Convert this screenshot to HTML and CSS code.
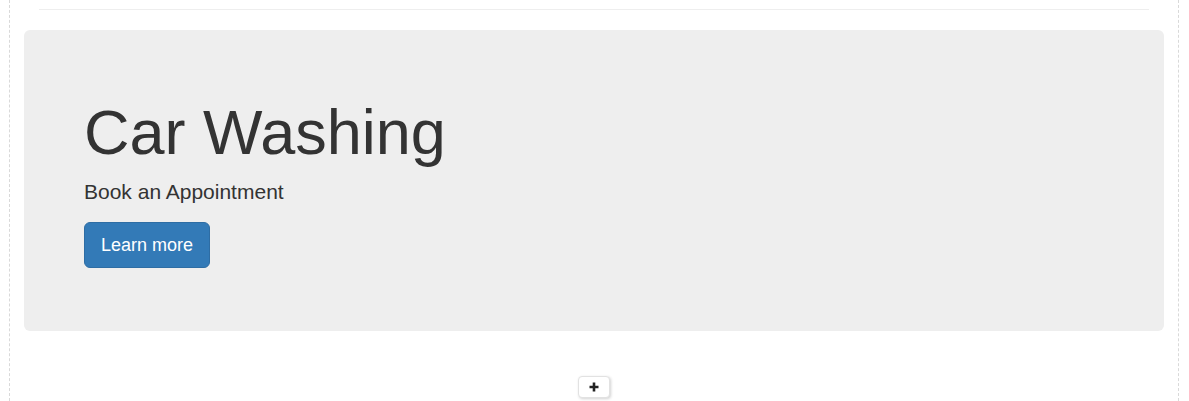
FILE: index.html
```html
<!DOCTYPE html>
<html>
<head>
<meta charset="utf-8">
<link rel="stylesheet" href="styles.css">
</head>
<body>
<div class="canvas">
  <div class="top-rule"></div>
  <div class="jumbotron">
    <h1 class="title">Car Washing</h1>
    <p class="lead">Book an Appointment</p>
    <p class="actions"><a class="btn-primary" href="#">Learn more</a></p>
  </div>
  <div class="add-row">
    <button class="add-btn" type="button" aria-label="Add"><svg class="plus" width="10" height="10" viewBox="0 0 10 10"><path d="M5 0.5V9.5M0.5 5H9.5" stroke="#222" stroke-width="2.6" fill="none"/></svg></button>
  </div>
</div>
</body>
</html>
```
FILE: styles.css
```css
html, body {
  margin: 0;
  padding: 0;
  background: #fff;
}
body {
  font-family: "Liberation Sans", Arial, Helvetica, sans-serif;
  color: #333;
  height: 401px;
  overflow: hidden;
}
.canvas {
  margin: 0 10px 0 9px;
  border-left: 1px dashed #d9d9d9;
  border-right: 1px dashed #d9d9d9;
  padding: 9px 14px 0;
  min-height: 401px;
  box-sizing: border-box;
}
.top-rule {
  margin: 0 15px;
  border-top: 1px solid #eee;
  height: 0;
}
.jumbotron {
  margin-top: 20px;
  background: #eee;
  border-radius: 6px;
  padding: 48px 60px 48px;
}
.title {
  font-size: 63px;
  font-weight: 500;
  line-height: 1.1;
  margin: 20px 0 10px;
  color: #333;
}
.lead {
  font-size: 21px;
  font-weight: 200;
  line-height: 30px;
  margin: 0 0 15px;
}
.actions {
  margin: 0 0 15px;
  font-size: 21px;
  line-height: 30px;
  display: flex;
}
.btn-primary {
  display: inline-block;
  background: #337ab7;
  border: 1px solid #2e6da4;
  color: #fff;
  text-decoration: none;
  font-size: 18px;
  line-height: 24px;
  padding: 10px 16px;
  border-radius: 6px;
}
.add-row {
  display: flex;
  justify-content: center;
  padding-top: 45px;
}
.add-btn {
  width: 32px;
  height: 22px;
  padding: 0;
  background: #fff;
  border: 1px solid #e2e2e2;
  border-radius: 4px;
  box-shadow: 1px 1px 3px rgba(0,0,0,0.18);
  display: flex;
  align-items: center;
  justify-content: center;
}
.plus {
  display: block;
}
```
